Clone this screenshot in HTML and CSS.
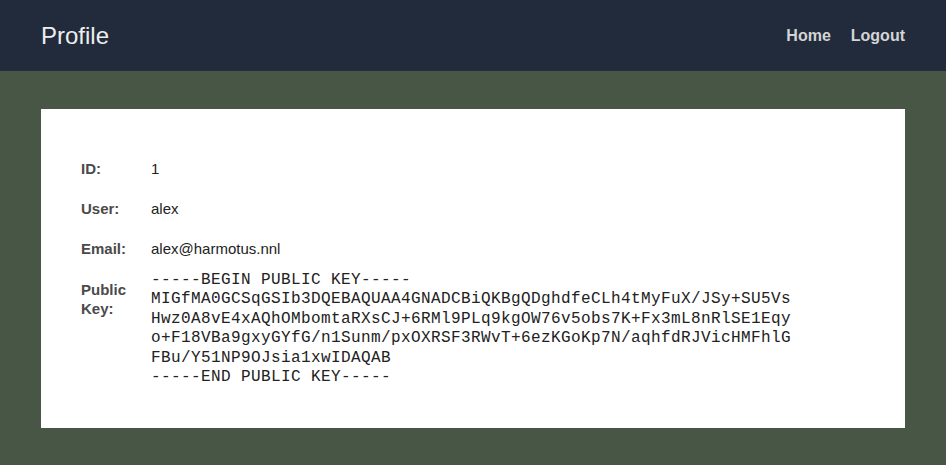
FILE: index.html
```html
<!DOCTYPE html>
<html lang="en">
<head>
<meta charset="utf-8">
<title>Profile</title>
<link rel="stylesheet" href="styles.css">
</head>
<body>
<header class="topbar">
  <div class="brand">Profile</div>
  <nav class="nav">
    <a class="nav-link" href="#">Home</a>
    <a class="nav-link" href="#">Logout</a>
  </nav>
</header>
<main class="page">
  <section class="card">
    <dl class="details">
      <dt class="label">ID:</dt>
      <dd class="value">1</dd>
      <dt class="label">User:</dt>
      <dd class="value">alex</dd>
      <dt class="label">Email:</dt>
      <dd class="value">alex@harmotus.nnl</dd>
      <dt class="label label-multi">Public Key:</dt>
      <dd class="value"><pre class="key">-----BEGIN PUBLIC KEY-----
MIGfMA0GCSqGSIb3DQEBAQUAA4GNADCBiQKBgQDghdfeCLh4tMyFuX/JSy+SU5Vs
Hwz0A8vE4xAQhOMbomtaRXsCJ+6RMl9PLq9kgOW76v5obs7K+Fx3mL8nRlSE1Eqy
o+F18VBa9gxyGYfG/n1Sunm/pxOXRSF3RWvT+6ezKGoKp7N/aqhfdRJVicHMFhlG
FBu/Y51NP9OJsia1xwIDAQAB
-----END PUBLIC KEY-----</pre></dd>
    </dl>
  </section>
</main>
</body>
</html>
```

FILE: styles.css
```css
html, body {
  margin: 0;
  padding: 0;
}

body {
  background: #475645;
  font-family: "Liberation Sans", Arial, sans-serif;
  min-height: 465px;
}

.topbar {
  height: 71px;
  background: #222b3c;
  display: flex;
  align-items: center;
  justify-content: space-between;
  padding: 0 41px;
  box-sizing: border-box;
}

.brand {
  color: #eeeeee;
  font-size: 24px;
  line-height: 28px;
}

.nav {
  display: flex;
  gap: 20px;
}

.nav-link {
  color: #d4d4d4;
  font-size: 16px;
  font-weight: bold;
  text-decoration: none;
  line-height: 20px;
}

.page {
  padding: 38px 41px;
}

.card {
  background: #ffffff;
  padding: 51px 40px 41px;
}

.details {
  margin: 0;
  display: grid;
  grid-template-columns: 70px 1fr;
  row-gap: 22px;
  font-size: 15px;
  line-height: 18px;
}

.label {
  font-weight: bold;
  color: #4a4a4a;
}

.label-multi {
  line-height: 19px;
  width: 50px;
}

.value {
  margin: 0;
  color: #222222;
}

.key {
  margin: -9px 0 0;
  font-family: "Liberation Mono", "Courier New", monospace;
  font-size: 16px;
  letter-spacing: 0.4px;
  line-height: 19.4px;
  color: #222222;
}
```
